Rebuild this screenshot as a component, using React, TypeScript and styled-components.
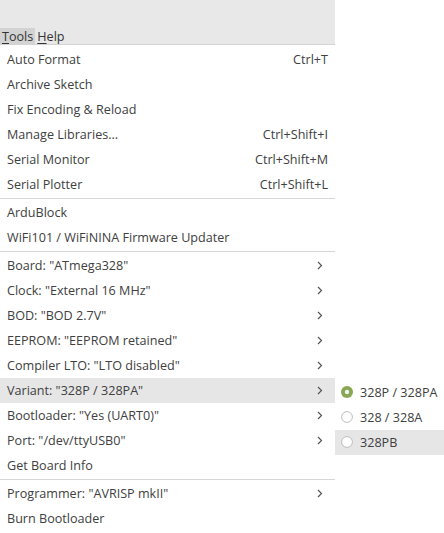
import React from 'react';
import styled, { createGlobalStyle } from 'styled-components';

const GlobalStyle = createGlobalStyle`
  html, body {
    margin: 0;
    padding: 0;
    background: #ffffff;
  }
  body {
    font-family: 'Open Sans', 'Noto Sans', 'DejaVu Sans', sans-serif;
    font-size: 12.6px;
    color: #404040;
  }
`;

const Page = styled.div`
  position: relative;
  width: 444px;
  height: 533px;
  overflow: hidden;
`;

const Column = styled.div`
  width: 335px;
  display: flex;
  flex-direction: column;
`;

const TopBar = styled.div`
  height: 44px;
  background: #e8e8e8;
  border-bottom: 1px solid #d4d4d4;
  display: flex;
  align-items: flex-end;
`;

const MenuTitle = styled.div<{ $active?: boolean }>`
  height: 16px;
  box-sizing: border-box;
  line-height: 16px;
  padding: 1px 2px 0;
  background: ${(p) => (p.$active ? '#d3d3d3' : 'transparent')};
  color: #333;
  span {
    text-decoration: underline;
    text-underline-offset: 2px;
  }
`;

const Menu = styled.div`
  padding-top: 2px;
  background: #fff;
  display: flex;
  flex-direction: column;
`;

const Item = styled.div<{ $hover?: boolean }>`
  height: 25px;
  box-sizing: border-box;
  display: flex;
  align-items: center;
  justify-content: space-between;
  padding: 0 7px 1px;
  background: ${(p) => (p.$hover ? '#e6e6e6' : 'transparent')};
  white-space: nowrap;
`;

const Shortcut = styled.span`
  color: #404040;
`;

const Arrow = styled.svg`
  width: 6px;
  height: 9px;
  margin-right: 5px;
`;

const Separator = styled.div`
  height: 3px;
  display: flex;
  align-items: center;
  &::after {
    content: '';
    flex: 1;
    height: 1px;
    background: #d6d6d6;
  }
`;

const SubMenu = styled.div`
  position: absolute;
  left: 335px;
  top: 378px;
  width: 109px;
  padding-top: 2px;
  background: #fff;
`;

const SubItem = styled.div<{ $hover?: boolean }>`
  height: 25px;
  box-sizing: border-box;
  display: flex;
  align-items: center;
  gap: 7px;
  padding: 0 0 1px 6px;
  background: ${(p) => (p.$hover ? '#e6e6e6' : 'transparent')};
  white-space: nowrap;
`;

const Radio = ({ checked }: { checked?: boolean }) =>
  checked ? (
    <svg width='12' height='12' viewBox='0 0 12 12'>
      <circle cx='6' cy='6' r='6' fill='#87a752' />
      <circle cx='6' cy='6' r='2.2' fill='#f2f2f2' />
    </svg>
  ) : (
    <svg width='12' height='12' viewBox='0 0 12 12'>
      <circle cx='6' cy='6' r='5.4' fill='#fff' stroke='#bdbdbd' strokeWidth='1' />
    </svg>
  );

const Chevron = () => (
  <Arrow viewBox='0 0 6 9'>
    <path d='M1 1 L4.5 4.5 L1 8' fill='none' stroke='#555' strokeWidth='1.2' />
  </Arrow>
);

type Entry = { label?: string; shortcut?: string; sub?: boolean; hover?: boolean; sep?: boolean };

const entries: Entry[] = [
  { label: 'Auto Format', shortcut: 'Ctrl+T' },
  { label: 'Archive Sketch' },
  { label: 'Fix Encoding & Reload' },
  { label: 'Manage Libraries...', shortcut: 'Ctrl+Shift+I' },
  { label: 'Serial Monitor', shortcut: 'Ctrl+Shift+M' },
  { label: 'Serial Plotter', shortcut: 'Ctrl+Shift+L' },
  { sep: true },
  { label: 'ArduBlock' },
  { label: 'WiFi101 / WiFiNINA Firmware Updater' },
  { sep: true },
  { label: 'Board: "ATmega328"', sub: true },
  { label: 'Clock: "External 16 MHz"', sub: true },
  { label: 'BOD: "BOD 2.7V"', sub: true },
  { label: 'EEPROM: "EEPROM retained"', sub: true },
  { label: 'Compiler LTO: "LTO disabled"', sub: true },
  { label: 'Variant: "328P / 328PA"', sub: true, hover: true },
  { label: 'Bootloader: "Yes (UART0)"', sub: true },
  { label: 'Port: "/dev/ttyUSB0"', sub: true },
  { label: 'Get Board Info' },
  { sep: true },
  { label: 'Programmer: "AVRISP mkII"', sub: true },
  { label: 'Burn Bootloader' },
];

const variants = [
  { label: '328P / 328PA', checked: true },
  { label: '328 / 328A' },
  { label: '328PB', hover: true },
];

const App = () => (
  <Page>
    <GlobalStyle />
    <Column>
      <TopBar>
        <MenuTitle $active>
          <span>T</span>ools
        </MenuTitle>
        <MenuTitle>
          <span>H</span>elp
        </MenuTitle>
      </TopBar>
      <Menu>
        {entries.map((e, i) =>
          e.sep ? (
            <Separator key={i} />
          ) : (
            <Item key={i} $hover={e.hover}>
              <span>{e.label}</span>
              {e.shortcut && <Shortcut>{e.shortcut}</Shortcut>}
              {e.sub && <Chevron />}
            </Item>
          )
        )}
      </Menu>
    </Column>
    <SubMenu>
      {variants.map((v) => (
        <SubItem key={v.label} $hover={v.hover}>
          <Radio checked={v.checked} />
          {v.label}
        </SubItem>
      ))}
    </SubMenu>
  </Page>
);

export default App;
